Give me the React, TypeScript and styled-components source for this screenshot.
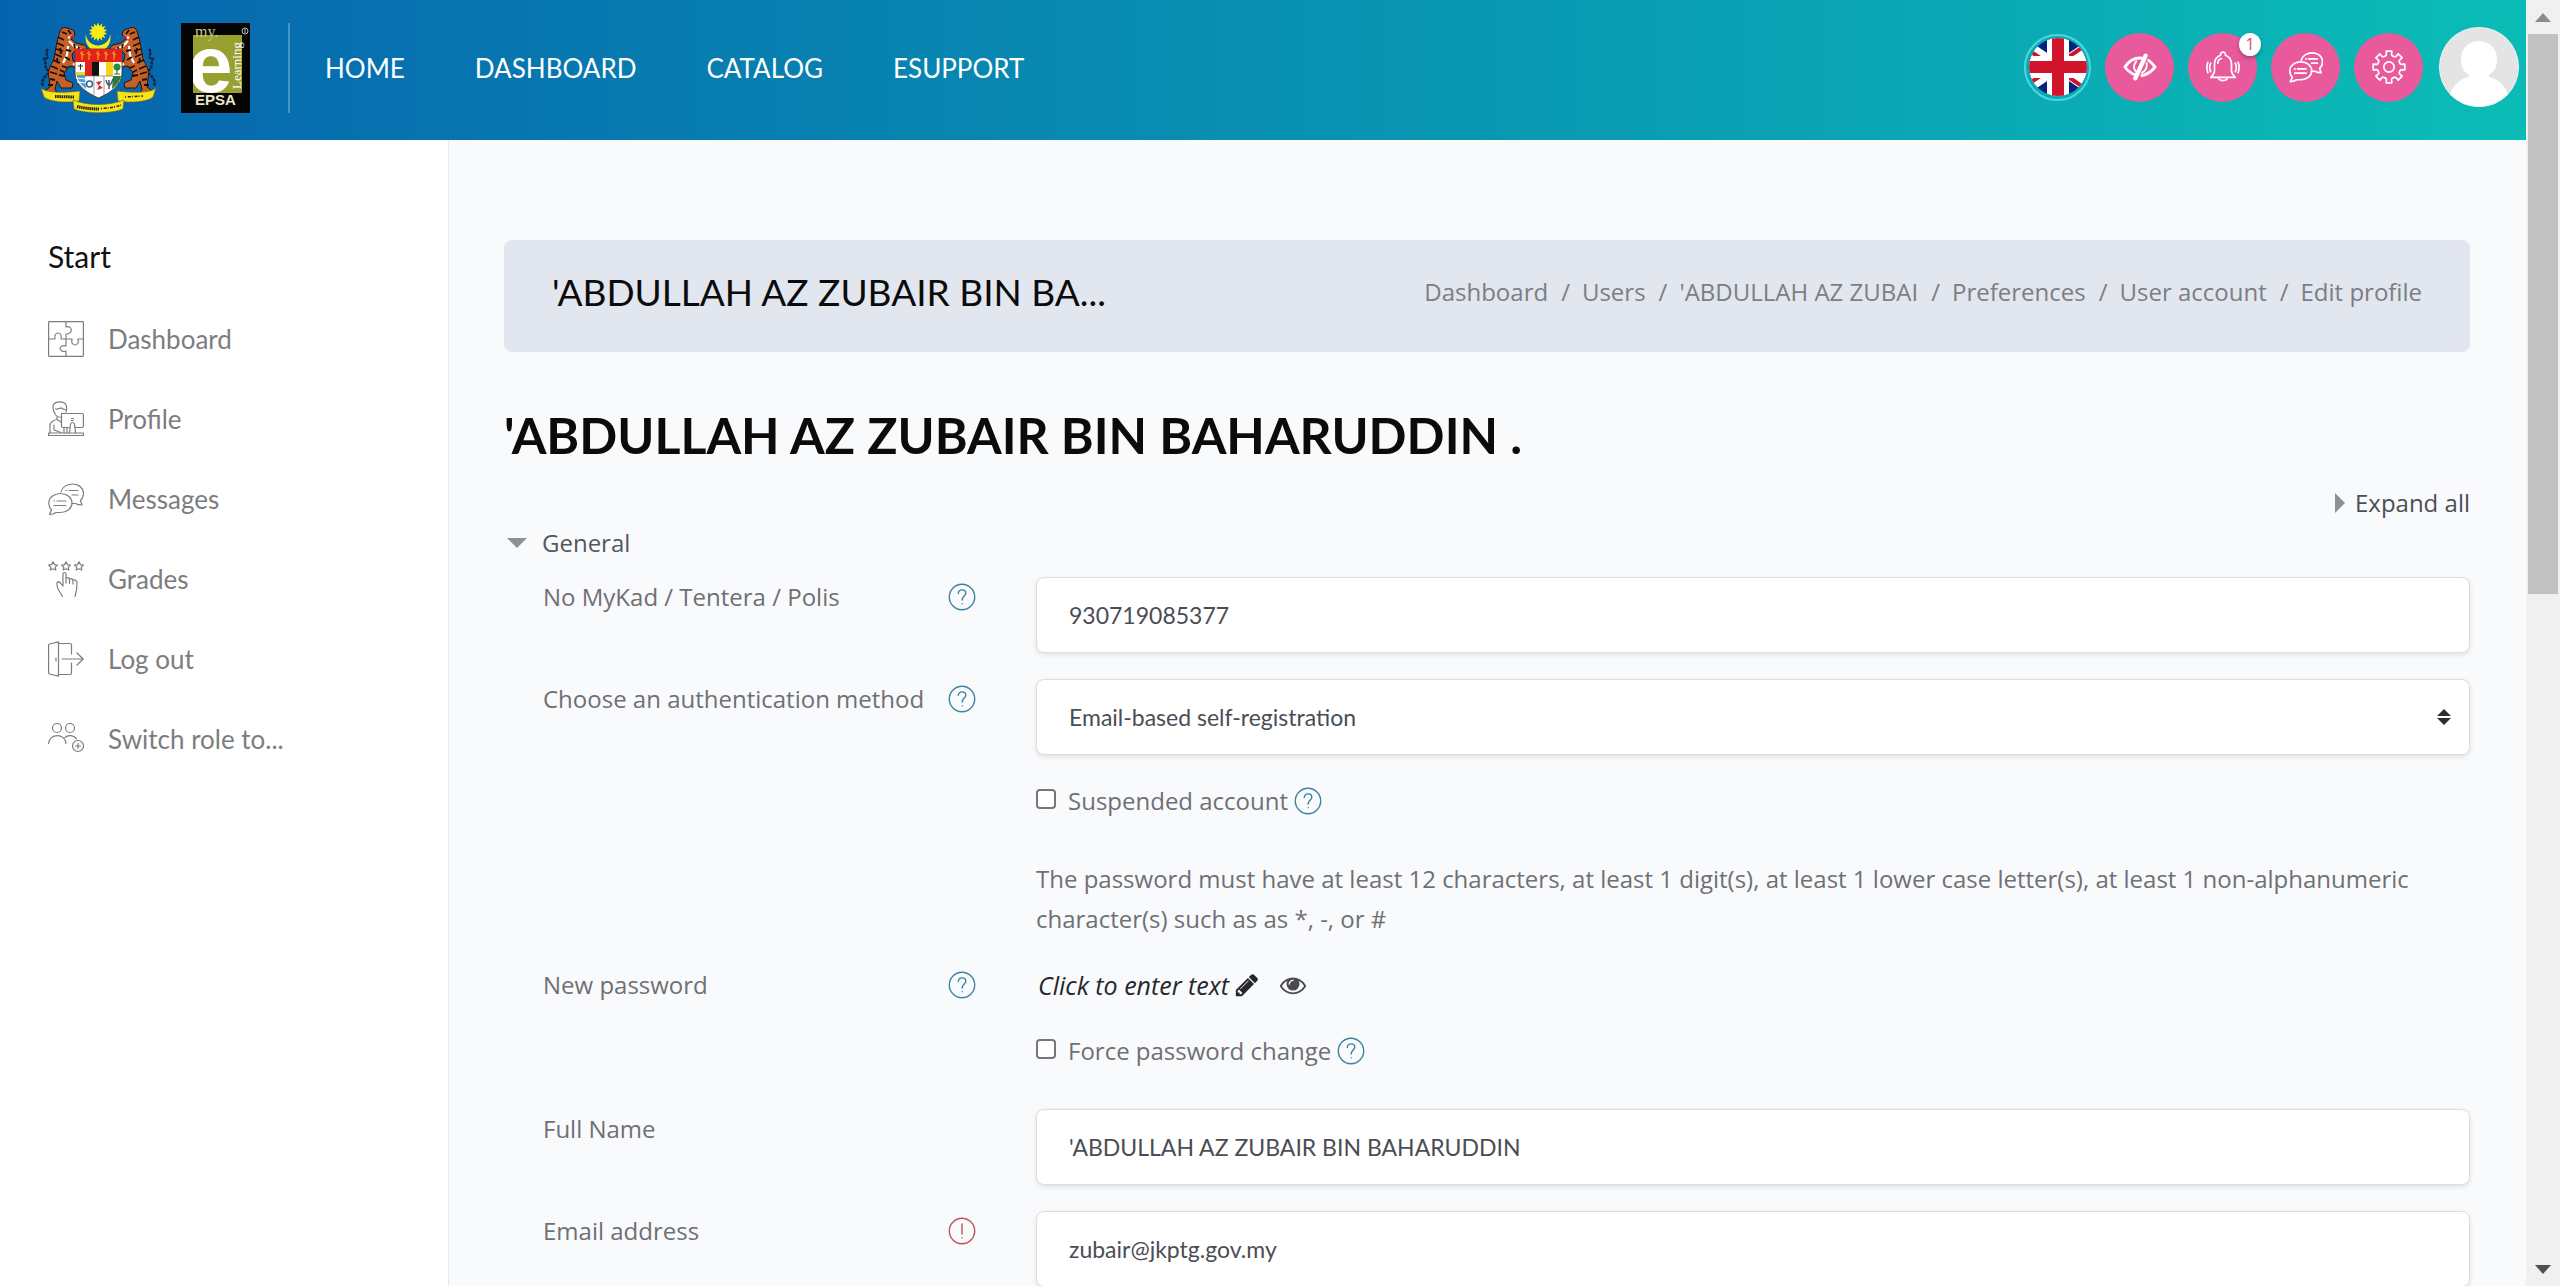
import React, { useId, useState } from "react";
import styled, { createGlobalStyle, css } from "styled-components";

const ui = `Lato, "Noto Sans", sans-serif`;
const body = `"Open Sans", "Noto Sans", sans-serif`;

const GlobalStyle = createGlobalStyle`
  *, *::before, *::after { box-sizing: border-box; }
  body { margin: 0; background: #f9fafc; font-family: ${body}; font-size: 24px; line-height: 40px; color: #6f7074; }
  a { color: inherit; text-decoration: none; }
  button { font: inherit; color: inherit; background: none; border: 0; padding: 0; cursor: pointer; }
  svg { display: block; flex: none; }
`;

/* ---------- page frame ---------- */

const Shell = styled.div`
  display: flex;
  height: 100vh;
  overflow: hidden;
`;

const Page = styled.div`
  flex: 1;
  min-width: 0;
  display: flex;
  flex-direction: column;
`;

const Columns = styled.div`
  flex: 1;
  min-height: 0;
  display: flex;
`;

/* ---------- scroll rail ---------- */

const Rail = styled.div`
  flex: none;
  width: 34px;
  padding: 0 2px;
  display: flex;
  flex-direction: column;
  background: #f0f0f0;
`;

const RailEnd = styled.div<{ $tone: string }>`
  height: 34px;
  display: flex;
  align-items: center;
  justify-content: center;
  color: ${(p) => p.$tone};
`;

const RailThumb = styled.div`
  flex: 46;
  background: #c1c1c1;
`;

const RailSpace = styled.div`
  flex: 54;
`;

/* ---------- top bar ---------- */

const TopBar = styled.header`
  flex: none;
  height: 140px;
  padding: 0 7px 4px 40px;
  display: flex;
  align-items: center;
  background: linear-gradient(90deg, #0664ae, #0bbcb6);
`;

const Logos = styled.a`
  display: flex;
  align-items: center;
  gap: 24px;
  padding-right: 38px;
  border-right: 2px solid rgba(255, 255, 255, 0.25);
`;

const Nav = styled.nav`
  flex: 1;
  display: flex;
  gap: 70px;
  padding-left: 35px;
  font: 26px/40px ${ui};
  color: #fff;
`;

const Tools = styled.div`
  display: flex;
  align-items: center;
  gap: 14px;
  padding-bottom: 2px;
`;

const round = css<{ $size: number }>`
  width: ${(p) => p.$size}px;
  height: ${(p) => p.$size}px;
  border-radius: 50%;
  display: flex;
  align-items: center;
  justify-content: center;
`;

const FlagButton = styled.button<{ $size: number }>`
  ${round}
  border: 2px solid #4fd6dc;
`;

const ToolButton = styled.button<{ $size: number }>`
  ${round}
  position: relative;
  background: #e85a9c;
  color: #fff;
`;

const Badge = styled.span`
  position: absolute;
  top: 0;
  right: -4px;
  width: 22px;
  height: 23px;
  border-radius: 50%;
  background: #fff;
  color: #d9477f;
  font: 16px/22px ${body};
  text-align: center;
  box-shadow: 0 2px 4px rgba(0, 0, 0, 0.3);
`;

const AvatarButton = styled.button<{ $size: number }>`
  ${round}
  margin-left: 2px;
  overflow: hidden;
`;

/* ---------- side menu ---------- */

const Side = styled.aside`
  flex: none;
  width: 449px;
  padding: 96px 48px 0;
  background: #fff;
  border-right: 1px solid #e9eaec;
  font-family: ${ui};
`;

const SideTitle = styled.h2`
  margin: 0 0 23px;
  font-size: 30px;
  font-weight: 400;
  line-height: 40px;
  color: #111;
`;

const SideList = styled.ul`
  margin: 0;
  padding: 0;
  list-style: none;
`;

const SideLink = styled.a`
  height: 80px;
  display: flex;
  align-items: center;
  gap: 24px;
  font-size: 26px;
  color: #7d7d7d;
`;

/* ---------- main column ---------- */

const Main = styled.main`
  flex: 1;
  min-width: 0;
  overflow: hidden;
  padding: 100px 56px 0 55px;
  background: #f9fafc;
`;

const Strip = styled.div`
  height: 112px;
  padding: 0 48px 8px;
  display: flex;
  align-items: center;
  justify-content: space-between;
  gap: 48px;
  background: #e2e6ee;
  border-radius: 8px;
`;

const StripTitle = styled.h2`
  margin: 0;
  font: 37px/48px ${ui};
  color: #0b0b0b;
  white-space: nowrap;
`;

const Crumbs = styled.ol`
  margin: 0;
  padding: 0;
  list-style: none;
  display: flex;
  color: #7c7e83;
  white-space: nowrap;

  li + li::before {
    content: "/";
    padding: 0 12px 0 13px;
  }
`;

const Title = styled.h1`
  margin: 51px 0 0;
  font: 700 50px/64px ${ui};
  color: #0b0b0b;
`;

const ExpandButton = styled.button`
  margin: 16px 0 0 auto;
  display: flex;
  align-items: center;
  gap: 10px;
  color: #4d4f56;

  svg {
    color: #8f9093;
  }
`;

const Legend = styled.button`
  display: flex;
  align-items: center;
  gap: 15px;
  padding-left: 3px;
  color: #55575d;

  svg {
    color: #8f9093;
  }
`;

const Rows = styled.div`
  padding: 14px 0 0 39px;
  display: grid;
  gap: 26px;
`;

const Row = styled.div`
  display: grid;
  grid-template-columns: 433px 1fr;
  column-gap: 60px;
`;

const LabelCell = styled.div`
  height: 40px;
  display: flex;
  align-items: center;
  justify-content: space-between;
`;

const ValueCell = styled.div`
  grid-column: 2;
`;

const field = css`
  display: block;
  width: 100%;
  height: 76px;
  padding: 0 32px;
  border: 1px solid #dcdde0;
  border-radius: 8px;
  background: #fff;
  box-shadow: 0 2px 5px rgba(0, 0, 0, 0.1);
  font: 23px/36px ${ui};
  color: #4b4d54;
`;

const TextInput = styled.input`
  ${field}
`;

const SelectWrap = styled.div`
  display: grid;
  align-items: center;

  & > * {
    grid-area: 1 / 1;
  }

  & > svg {
    justify-self: end;
    margin-right: 19px;
    color: #2e2f33;
    pointer-events: none;
  }
`;

const Select = styled.select`
  ${field}
  appearance: none;
`;

const CheckLine = styled.div`
  height: 52px;
  padding-bottom: 12px;
  display: flex;
  align-items: center;
  gap: 6px;
`;

const CheckBox = styled.input`
  appearance: none;
  width: 20px;
  height: 20px;
  margin: 0 6px 4px 0;
  border: 2px solid #76777b;
  border-radius: 4px;
  background: #fff;

  &:checked {
    background: #2f7f9f;
  }
`;

const Note = styled.p`
  margin: 0;
`;

const EditLine = styled.div`
  height: 40px;
  display: flex;
  align-items: center;
  gap: 20px;
`;

const EditButton = styled.button`
  display: flex;
  align-items: center;
  gap: 5px;
  padding-left: 2px;
  font-size: 25px;
  font-style: italic;
  color: #26272b;
`;

const IconButton = styled.button<{ $tone: string }>`
  display: flex;
  color: ${(p) => p.$tone};
`;

/* ---------- drawings ---------- */

const Caret = ({ w, h, d }: { w: number; h: number; d: string }) => (
  <svg width={w} height={h} viewBox={`0 0 ${w} ${h}`} fill="currentColor" aria-hidden="true">
    <path d={d} />
  </svg>
);

const Pencil = () => (
  <svg width="26" height="26" viewBox="0 0 1792 1792" fill="currentColor" aria-hidden="true">
    <path d="M491 1536l91-91-235-235-91 91v107h128v128h107zM1014 608q0-22-22-22-10 0-17 7l-542 542q-7 7-7 17 0 22 22 22 10 0 17-7l542-542q7-7 7-17zM960 416l416 416-832 832h-416v-416zM1643 512q0 53-37 90l-166 166-416-416 166-165q36-38 90-38 53 0 91 38l235 234q37 39 37 91z" />
  </svg>
);

const Eye = () => (
  <svg width="26" height="26" viewBox="0 0 1792 1792" fill="currentColor" aria-hidden="true">
    <path d="M1664 960q-152-236-381-353 61 104 61 225 0 185-131.5 316.5t-316.5 131.5-316.5-131.5-131.5-316.5q0-121 61-225-229 117-381 353 133 205 333.5 326.5t434.500 121.500 434.500-121.500 333.500-326.500zM944 576q0-20-14-34t-34-14q-125 0-214.500 89.500t-89.500 214.500q0 20 14 34t34 14 34-14 14-34q0-86 61-147t147-61q20 0 34-14t14-34zM1792 960q0 34-20 69-140 230-376.500 368.500t-499.500 138.500-499.500-139-376.500-368q-20-35-20-69t20-69q140-229 376.500-368t499.500-139 499.500 139 376.500 368q20 35 20 69z" />
  </svg>
);

const Tiger = () => (
  <g>
    <path d="M9 50C3 54 0 62 4 62M9 48C2 44 8 38 3 35M6 36C10 33 4 31 8 26" fill="none" stroke="#10233d" strokeWidth="2.4" strokeDasharray="3 1" />
    <path
      d="M20 8L22 5C25 4 30 5 34 8L35 12 31 16 36 20 44 22C49 25 48 30 43 30L35 28 32 31 33 38 41 39 39 45 29 43 24 50 26 57 33 60 32 65H21L17 58 15 66 17 70H5L6 67 10 64 9 55C7 47 11 42 14 36L16 24 18 15Z"
      fill="#c65f27"
      stroke="#27140b"
      strokeWidth="1"
    />
    <path d="M29 18L34 23 42 27M28 23L27 32 23 40M32 13L28 15M33 41L38 42" fill="none" stroke="#fff" strokeWidth="2.2" />
    <path
      d="M18 14L24 17M17 20L24 23M16 26L23 28M15 31L22 34M13 37L20 40M11 43L18 46M10 49L17 51M10 56L15 57M8 62L13 62M22 9L27 11M28 7L31 11M26 27L31 28M25 34L30 37M22 43L28 45M19 52L25 53M34 21L35 25M39 24L38 28M20 47L24 49M20 25L21 31M17 35L18 40"
      stroke="#1b0f0a"
      strokeWidth="1.8"
    />
    <path d="M30 14L34 13" stroke="#d8232b" strokeWidth="2" />
  </g>
);

const Star14 = ({ cx, cy, r }: { cx: number; cy: number; r: number }) => (
  <polygon
    fill="#f7ec13"
    points={Array.from({ length: 28 }, (_, i) => {
      const a = (Math.PI * i) / 14;
      const q = i % 2 ? r * 0.66 : r;
      return `${(cx + q * Math.sin(a)).toFixed(2)},${(cy - q * Math.cos(a)).toFixed(2)}`;
    }).join(" ")}
  />
);

const Crest = () => (
  <svg width="117" height="90" viewBox="0 0 117 90" role="img" aria-label="Coat of arms of Malaysia">
    <Tiger />
    <g transform="translate(117 0) scale(-1 1)">
      <Tiger />
    </g>
    <path d="M46 11A12.500 13.500 0 1 0 70 11A11 10.500 0 1 1 46 11Z" fill="#f7ec13" />
    <Star14 cx={58} cy={9} r={9.500} />
    <path d="M35 26H82V50C82 62 70 70 58.500 75C47 70 35 62 35 50Z" fill="#fff" stroke="#4d2a2a" strokeWidth="0.8" />
    <path d="M35 26H82V39H35Z" fill="#e2231a" />
    <path d="M42 28V37M49 28V37M58 28V37M66 28V37M74 28V37M40 30L44 32M47 30L51 32M56 30L60 32M64 30L68 32M72 30L76 32" stroke="#f2a01c" strokeWidth="1.2" />
    <path d="M45 39H52V53H45Z" fill="#e2231a" />
    <path d="M52 39H59V53H52Z" fill="#111" />
    <path d="M66 39H73V53H66Z" fill="#f7d417" />
    <path d="M36 49H45V53L46 66Q37 59 36 49Z" fill="#4d9ed6" />
    <path d="M36 49H45V52H36Z" fill="#f2d21c" />
    <path d="M38 43H43M40.500 41V47" stroke="#333" strokeWidth="1" />
    <path d="M36 55L46 56M37 59L46 60" stroke="#fff" strokeWidth="1" />
    <path d="M73 53H81Q80 60 72 66Z" fill="#2e7d3a" />
    <circle cx="77" cy="44" r="3.5" fill="#2e8b3d" />
    <path d="M77 45V51M74 51H80" stroke="#2e7d3a" strokeWidth="1.2" />
    <path d="M54 53V72M64 53V72M45 53H73" stroke="#777" strokeWidth="0.7" />
    <circle cx="49.500" cy="61" r="3" fill="none" stroke="#34618f" strokeWidth="1.5" />
    <path d="M56 59L62 58 59 62 63 65 57 67 59 63Z" fill="#d8232b" />
    <path d="M66 57Q69 68 73 56M69 57V66" fill="none" stroke="#43566b" strokeWidth="1.5" />
    <g fill="#f7e31a" stroke="#6e6410" strokeWidth="0.6">
      <path d="M1 65C6 70 24 70 40 68L39 78C27 80 9 79 4 74Z" />
      <path d="M116 65C111 70 93 70 77 68L78 78C90 80 108 79 113 74Z" />
      <path d="M33 77C48 83 68 83 84 77L83 86C70 91 46 91 34 86Z" />
    </g>
    <g fill="none" stroke="#222" strokeWidth="3">
      <path d="M15 73.500L34 74" strokeDasharray="1.5 0.7" />
      <path d="M85 74L103 73" strokeDasharray="1 1.8 3 1" strokeWidth="1.5" />
      <path d="M37 83.500Q48 86 59 86" strokeDasharray="1.5 0.6" />
      <path d="M61 85.500Q73 85 81 82" strokeDasharray="1 1.5 3 1" strokeWidth="1.5" />
    </g>
  </svg>
);

const EpsaLogo = () => (
  <svg width="69" height="90" viewBox="0 0 69 90" role="img" aria-label="my e-Learning EPSA">
    <rect width="69" height="90" fill="#050505" />
    <rect x="12" y="12" width="49" height="58" fill="#98a02f" />
    <text x="7" y="69" fontFamily="Liberation Sans, sans-serif" fontWeight="700" fontSize="80" fill="#fff">e</text>
    <rect width="12" height="90" fill="#050505" />
    <text x="14" y="14" fontFamily="Liberation Serif, serif" fontSize="16" fill="#c3c88a">my.</text>
    <text transform="translate(60 66) rotate(-90)" fontFamily="Liberation Serif, serif" fontSize="13" fill="#fff">Learning</text>
    <rect y="70" width="69" height="20" fill="#050505" />
    <text x="14" y="82" fontFamily="Liberation Sans, sans-serif" fontWeight="700" fontSize="15" fill="#e7e9c4">EPSA</text>
    <circle cx="64" cy="8" r="3" fill="none" stroke="#bbb" />
    <path d="M64 6V10" stroke="#bbb" />
  </svg>
);

const UkFlag = () => {
  const clip = useId();
  return (
    <svg width="58" height="58" viewBox="0 0 58 58" aria-hidden="true">
      <clipPath id={clip}>
        <circle cx="29" cy="29" r="29" />
      </clipPath>
      <g clipPath={`url(#${clip})`}>
        <rect width="58" height="58" fill="#06247d" />
        <path d="M-14 0L72 58M72 0L-14 58" stroke="#fff" strokeWidth="11" />
        <path d="M-14 3L29 32M72 -3L29 26M72 61L29 32M-14 55L29 26" stroke="#cf142b" strokeWidth="4" />
        <path d="M29 0V58M0 29H58" stroke="#fff" strokeWidth="22" />
        <path d="M29 0V58" stroke="#cf142b" strokeWidth="12" />
        <path d="M0 29H58" stroke="#cf142b" strokeWidth="12" />
      </g>
    </svg>
  );
};

const Line = ({ size = 36, width = 1.2, children }: { size?: number; width?: number; children: React.ReactNode }) => (
  <svg
    width={size}
    height={size}
    viewBox="0 0 36 36"
    fill="none"
    stroke="currentColor"
    strokeWidth={width}
    strokeLinecap="round"
    strokeLinejoin="round"
    aria-hidden="true"
  >
    {children}
  </svg>
);

const HiddenEye = () => (
  <Line size={34} width={3}>
    <path d="M14 27C9 25 5 22 2 18C6 12 12 8.500 18 8.500C19 8.500 20 8.500 21 9" />
    <path d="M27 11C30 13 32 15 34 18C30 23 26 26 20 27" />
    <path d="M24 6L13 30" strokeWidth="4.6" />
    <path d="M14 12C11 16 11 20 14 23" strokeWidth="2" />
    <path d="M25 14C26 19 24 22 20 24" strokeWidth="2" />
  </Line>
);

const Bell = () => (
  <Line size={34} width={1.8}>
    <path d="M15.500 5.500A2.600 2.600 0 1 1 20.500 5.500C25 7 27 10 27 15V22C27 25 29 27 31 29H5C7 27 9 25 9 22V15C9 10 11 7 15.500 5.500Z" />
    <path d="M13 29C14 33.500 22 33.500 23 29M12.500 14C12.500 11 14 9.500 16.500 9" />
    <path d="M5 14C3.500 17 3.500 20 5 23M2 13C0.500 17 0.500 20 2 24M31 14C32.500 17 32.500 20 31 23M34 13C35.500 17 35.500 20 34 24" />
  </Line>
);

const Chats = ({ size = 36, width = 1.2 }: { size?: number; width?: number }) => (
  <Line size={size} width={width}>
    <path d="M13 11C14 6 19 3 24.500 3C31 3 35.500 7 35.500 12.500C35.500 15.500 34 18 32.500 19.500L34 24C31 24 29 23.500 27.500 22.500L24 22.500" />
    <path d="M12.500 12.500C19 12.500 24 16.500 24 22C24 27.500 19 31.500 12.500 31.500H8C6 33 4 33.500 1.500 33.500L3.500 29C1.500 27 0.800 24.500 0.800 22C0.800 16.500 6 12.500 12.500 12.500Z" />
    <path d="M18 9.500H18.500M21 9.500H30M24 14H30M6 20H6.500M9 20H18M6 24.500H18" />
  </Line>
);

const gearPath = Array.from({ length: 8 }, (_, i) => {
  const at = (deg: number, r: number) => {
    const a = ((i * 45 + deg - 90) * Math.PI) / 180;
    return `${(18 + r * Math.cos(a)).toFixed(2)} ${(18 + r * Math.sin(a)).toFixed(2)}`;
  };
  return `${i ? "L" : "M"}${at(-17, 12.3)}L${at(-12, 13)}L${at(-10, 17)}L${at(10, 17)}L${at(12, 13)}L${at(17, 12.3)}`;
}).join("") + "Z";

const Gear = () => (
  <Line size={34} width={1.8}>
    <path d={gearPath} />
    <circle cx="18" cy="18" r="5.5" />
  </Line>
);

const Avatar = () => (
  <svg width="80" height="80" viewBox="0 0 80 80" aria-hidden="true">
    <rect width="80" height="80" fill="#e4e4e4" />
    <path d="M40 14C51 14 58 22 58 32C58 40 55 45 50 48V50C60 52 67 60 70 70L62 80H18L10 70C13 60 20 52 30 50V48C25 45 22 40 22 32C22 22 29 14 40 14Z" fill="#fff" />
    <circle cx="40" cy="40" r="39.5" fill="none" stroke="#dff3f4" />
  </svg>
);

const Puzzle = () => (
  <Line>
    <rect x="0.6" y="0.6" width="34.8" height="34.8" rx="0.8" />
    <path d="M18 0.600V6C24 4 26 13 18 13V18M0.600 18H7C5 10 15 10 13 18H24C22 26 32 26 30 18H35.400M18 35.400V30C10 32 10 23 18 25V18M13 18H18" />
  </Line>
);

const Desk = () => (
  <Line>
    <path d="M0.600 32H35.400V34.500H0.600ZM14 12.500H34Q35.400 12.500 35.400 14V25Q35.400 26.500 34 26.500H27M21 26.500H15Q13.500 26.500 13.500 25V12.500" />
    <path d="M21.500 32L22.500 23Q24.500 20 26.500 23L27.500 32M23.500 17.500H25.500M23.500 19.500H25.500" />
    <path d="M6 11C3 3 7 0.800 12 0.800C17 0.800 20 4 18 11M7.500 8C11 8.500 13 6.500 13.500 7C15 8.500 16 8 17 8.500M6.500 11C7 15 9 16 13 16.500M9 16V18.500C4 19.500 2 21 2 25V32M6 24V29L13 31.500M10 19L13 21M16 27V32M19 27V32" />
  </Line>
);

const starAt = (x: number) =>
  `M${x} 0.8L${x + 1.4} 3.6L${x + 4.4} 4L${x + 2.2} 6.2L${x + 2.8} 9L${x} 7.8L${x - 2.8} 9L${x - 2.2} 6.2L${x - 4.4} 4L${x - 1.4} 3.6Z`;

const Rating = () => (
  <Line>
    <path d={starAt(5) + starAt(18) + starAt(31)} />
    <path d="M14.500 35.500L10 28C9 25 8.500 22 9.500 21C11 20 12 21 15 25V13C15 11 18 11 18 13V22M18 17C20 16 21.500 17 21.500 19V22.500M21.500 18C23.500 17 25 18 25 20V23M25 19C27.500 18.500 29 20 29 22C29 28 28.500 31 27 35.500" />
  </Line>
);

const Door = () => (
  <Line>
    <path d="M10.500 0.800V35.200L1.500 33Q0.600 32.800 0.600 32V4Q0.600 3.200 1.500 3ZM10.500 2.500H22Q23.500 2.500 23.500 4V13M23.500 22V32Q23.500 33.500 22 33.500H10.500M8 17V20M14 18H35M29 12L35.200 18L29 24" />
  </Line>
);

const Group = () => (
  <Line>
    <circle cx="9" cy="7" r="4.5" />
    <circle cx="22" cy="7" r="4.5" />
    <path d="M0.600 22.500C1 12 17.500 12 18 22.500M17 16.500C20 13.500 26 14 28.500 18" />
    <circle cx="30" cy="25" r="5.5" />
    <path d="M27.500 25H32.500M30 22.500V27.500" />
  </Line>
);

const Mark = ({ kind }: { kind: "help" | "required" }) => (
  <svg width="28" height="28" viewBox="0 0 28 28" fill="none" stroke="currentColor" strokeWidth="1.4" strokeLinecap="round" aria-hidden="true">
    <circle cx="14" cy="14" r="12.7" />
    {kind === "help" ? (
      <path d="M10.300 10.500C10.300 5.500 17.800 5.800 17.800 10.300C17.800 13 14.200 13.300 14.200 17M14.200 20.600V20.800" />
    ) : (
      <path d="M14 7V17M14 20.600V20.800" />
    )}
  </svg>
);

/* ---------- pieces ---------- */

const Help = ({ about }: { about: string }) => (
  <IconButton type="button" $tone="#3f82a0" aria-label={`Help with ${about}`}>
    <Mark kind="help" />
  </IconButton>
);

type FieldRowProps = {
  id: string;
  label: string;
  mark?: "help" | "required";
  children: React.ReactNode;
};

const FieldRow = ({ id, label, mark, children }: FieldRowProps) => (
  <Row>
    <LabelCell>
      <label htmlFor={id}>{label}</label>
      {mark === "help" && <Help about={label} />}
      {mark === "required" && (
        <IconButton type="button" $tone="#c0525c" aria-label="Required">
          <Mark kind="required" />
        </IconButton>
      )}
    </LabelCell>
    <ValueCell>{children}</ValueCell>
  </Row>
);

const CheckRow = ({ id, label }: { id: string; label: string }) => (
  <Row>
    <ValueCell>
      <CheckLine>
        <CheckBox id={id} type="checkbox" />
        <label htmlFor={id}>{label}</label>
        <Help about={label} />
      </CheckLine>
    </ValueCell>
  </Row>
);

const navItems = ["HOME", "DASHBOARD", "CATALOG", "ESUPPORT"];

const sideItems = [
  { label: "Dashboard", icon: <Puzzle /> },
  { label: "Profile", icon: <Desk /> },
  { label: "Messages", icon: <Chats /> },
  { label: "Grades", icon: <Rating /> },
  { label: "Log out", icon: <Door /> },
  { label: "Switch role to...", icon: <Group /> },
];

const crumbs = ["Dashboard", "Users", "'ABDULLAH AZ ZUBAI", "Preferences", "User account", "Edit profile"];

export default function App() {
  const [open, setOpen] = useState(true);

  return (
    <Shell>
      <GlobalStyle />
      <Page>
        <TopBar>
          <Logos href="#">
            <Crest />
            <EpsaLogo />
          </Logos>
          <Nav>
            {navItems.map((item) => (
              <a key={item} href="#">{item}</a>
            ))}
          </Nav>
          <Tools>
            <FlagButton type="button" $size={67} aria-label="Language"><UkFlag /></FlagButton>
            <ToolButton type="button" $size={69} aria-label="Accessibility"><HiddenEye /></ToolButton>
            <ToolButton type="button" $size={69} aria-label="Notifications">
              <Bell />
              <Badge>1</Badge>
            </ToolButton>
            <ToolButton type="button" $size={69} aria-label="Messages"><Chats size={34} width={1.8} /></ToolButton>
            <ToolButton type="button" $size={69} aria-label="Settings"><Gear /></ToolButton>
            <AvatarButton type="button" $size={80} aria-label="Account"><Avatar /></AvatarButton>
          </Tools>
        </TopBar>

        <Columns>
          <Side>
            <SideTitle>Start</SideTitle>
            <SideList>
              {sideItems.map((item) => (
                <li key={item.label}>
                  <SideLink href="#">
                    {item.icon}
                    {item.label}
                  </SideLink>
                </li>
              ))}
            </SideList>
          </Side>

          <Main>
            <Strip>
              <StripTitle>'ABDULLAH AZ ZUBAIR BIN BA...</StripTitle>
              <Crumbs>
                {crumbs.map((c) => (
                  <li key={c}><a href="#">{c}</a></li>
                ))}
              </Crumbs>
            </Strip>

            <Title>'ABDULLAH AZ ZUBAIR BIN BAHARUDDIN .</Title>

            <form onSubmit={(e) => e.preventDefault()}>
              <ExpandButton type="button" onClick={() => setOpen(true)}>
                <Caret w={10} h={20} d="M0 0L10 10L0 20Z" />
                Expand all
              </ExpandButton>
              <Legend type="button" aria-expanded={open} onClick={() => setOpen(!open)}>
                <Caret w={20} h={10} d="M0 0H20L10 10Z" />
                General
              </Legend>

              {open && (
                <Rows>
                  <FieldRow id="idno" label="No MyKad / Tentera / Polis" mark="help">
                    <TextInput id="idno" defaultValue="930719085377" />
                  </FieldRow>
                  <FieldRow id="auth" label="Choose an authentication method" mark="help">
                    <SelectWrap>
                      <Select id="auth">
                        <option>Email-based self-registration</option>
                      </Select>
                      <Caret w={14} h={18} d="M0 8L7 1L14 8ZM0 10H14L7 17Z" />
                    </SelectWrap>
                  </FieldRow>
                  <CheckRow id="suspended" label="Suspended account" />
                  <Row>
                    <ValueCell>
                      <Note>
                        The password must have at least 12 characters, at least 1 digit(s), at least 1 lower case letter(s), at
                        least 1 non-alphanumeric character(s) such as as *, -, or #
                      </Note>
                    </ValueCell>
                  </Row>
                  <FieldRow id="newpass" label="New password" mark="help">
                    <EditLine>
                      <EditButton id="newpass" type="button">
                        Click to enter text
                        <Pencil />
                      </EditButton>
                      <IconButton type="button" $tone="#4a4b50" aria-label="Reveal">
                        <Eye />
                      </IconButton>
                    </EditLine>
                  </FieldRow>
                  <CheckRow id="force" label="Force password change" />
                  <FieldRow id="fullname" label="Full Name">
                    <TextInput id="fullname" defaultValue="'ABDULLAH AZ ZUBAIR BIN BAHARUDDIN" />
                  </FieldRow>
                  <FieldRow id="email" label="Email address" mark="required">
                    <TextInput id="email" type="email" defaultValue="zubair@jkptg.gov.my" />
                  </FieldRow>
                </Rows>
              )}
            </form>
          </Main>
        </Columns>
      </Page>

      <Rail aria-hidden="true">
        <RailEnd $tone="#8b8b8b"><Caret w={16} h={9} d="M0 9L8 0L16 9Z" /></RailEnd>
        <RailThumb />
        <RailSpace />
        <RailEnd $tone="#505050"><Caret w={16} h={9} d="M0 0H16L8 9Z" /></RailEnd>
      </Rail>
    </Shell>
  );
}
